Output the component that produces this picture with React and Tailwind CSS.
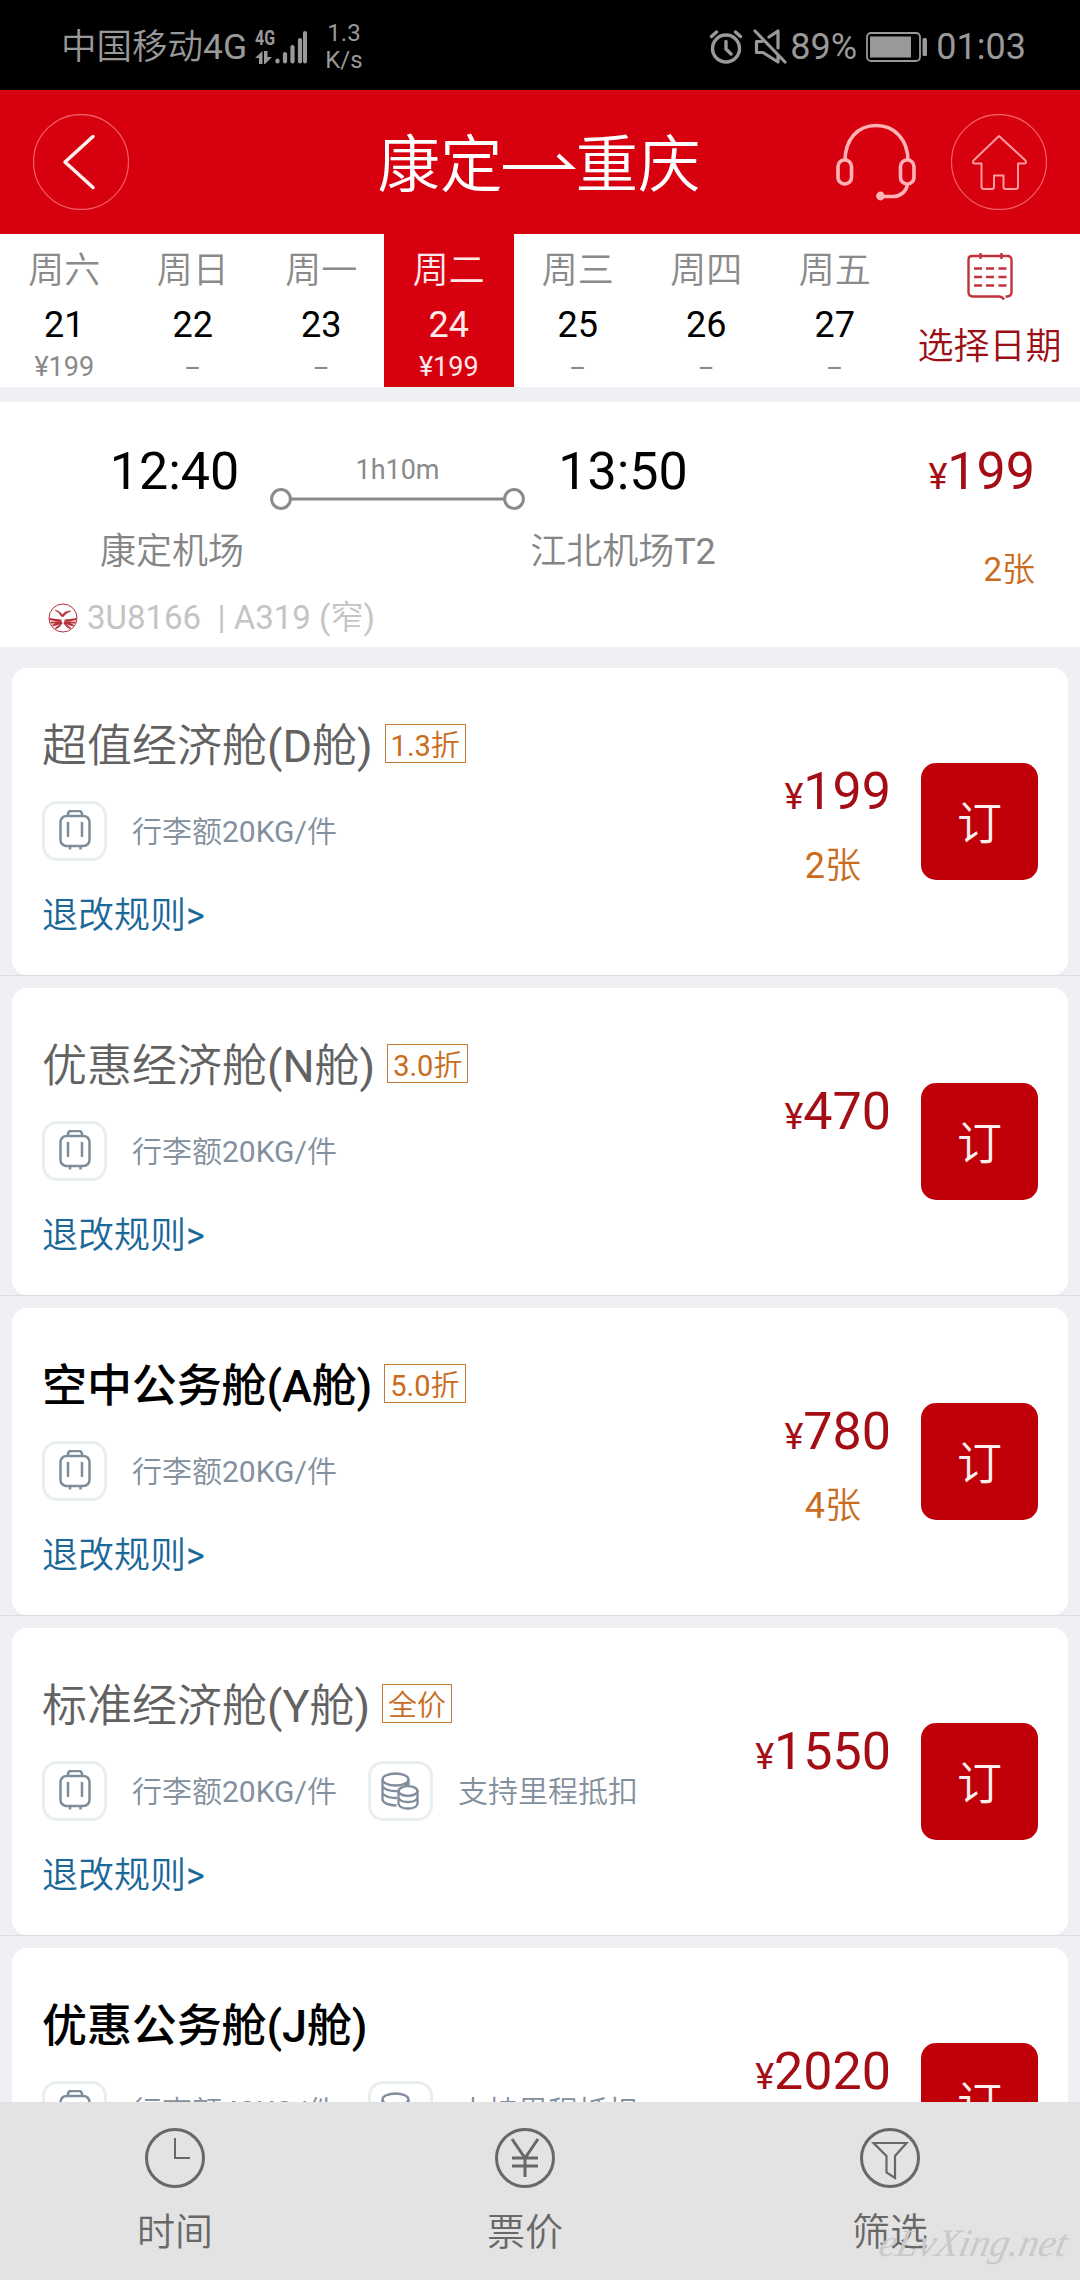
import { clsx } from "clsx";

const days = [
  { week: "周六", date: "21", price: "¥199" },
  { week: "周日", date: "22", price: "--" },
  { week: "周一", date: "23", price: "--" },
  { week: "周二", date: "24", price: "¥199", active: true },
  { week: "周三", date: "25", price: "--" },
  { week: "周四", date: "26", price: "--" },
  { week: "周五", date: "27", price: "--" },
];

const cabins = [
  { name: "超值经济舱(D舱)", discount: "1.3折", baggage: "行李额20KG/件", price: "199", seats: "2张" },
  { name: "优惠经济舱(N舱)", discount: "3.0折", baggage: "行李额20KG/件", price: "470" },
  { name: "空中公务舱(A舱)", discount: "5.0折", baggage: "行李额20KG/件", price: "780", seats: "4张", business: true },
  { name: "标准经济舱(Y舱)", discount: "全价", baggage: "行李额20KG/件", price: "1550", mileage: true },
  { name: "优惠公务舱(J舱)", baggage: "行李额40KG/件", price: "2020", mileage: true, business: true },
];

function StatusBar() {
  return (
    <div className="flex h-[90px] shrink-0 items-center justify-between bg-black pt-[3px] pl-[61px] pr-[54px] text-[36px] leading-[36px] text-[#999]">
      <div className="flex items-center">
        <span className="w-[194px] whitespace-nowrap text-[35.5px]">中国移动4G</span>
        <div className="flex w-[20px] flex-col">
          <span className="origin-left scale-x-[0.76] text-[21px] font-bold leading-[16px]">4G</span>
          <svg className="mt-[5px]" width="18" height="13" viewBox="0 0 18 13" fill="#999">
            <path d="M7.500 0v13H4V7H0zM9 0h3.500v6H17L10 13H9z" />
          </svg>
        </div>
        <svg width="32" height="34" viewBox="0 0 32 34" stroke="#999" strokeWidth="4.200" strokeLinecap="round">
          <path d="M2.500 30.500v1M10 24v7.500M17.500 17v14.500M25 10v21.500" />
          <path d="M30 3v28.500" strokeWidth="4" />
        </svg>
        <div className="ml-[17px] w-[40px] text-center text-[24px] leading-[27px]">
          <p>1.3</p>
          <p>K/s</p>
        </div>
      </div>
      <div className="flex items-center">
        <svg width="34" height="34" viewBox="0 0 34 34" fill="none" stroke="#999" strokeWidth="3.400" strokeLinecap="round">
          <circle cx="17" cy="18.500" r="13.500" />
          <path d="M17 11.500v7.500l5 5M2.500 6.500l5-4.500M31.500 6.500l-5-4.500" />
        </svg>
        <svg className="ml-[10px]" width="34" height="35" viewBox="0 0 34 35" fill="none" stroke="#999" strokeWidth="3.200" strokeLinecap="round" strokeLinejoin="round">
          <path d="M2 2l30 31M16 8l9-6v17M9 12.500H3.500v11H10l15 9.500v-7" />
        </svg>
        <span className="ml-[3px] w-[76px]">89%</span>
        <svg width="62" height="30" viewBox="0 0 62 30" fill="#999">
          <rect x="1" y="1" width="53" height="28" rx="4" fill="none" stroke="#999" strokeWidth="1.800" />
          <rect x="4" y="4.500" width="41" height="21" />
          <rect x="56.500" y="6" width="4.500" height="18" rx="1.500" />
        </svg>
        <span className="ml-[8px]">01:03</span>
      </div>
    </div>
  );
}

function Header() {
  return (
    <header className="flex h-[144px] shrink-0 items-center justify-between bg-[#d7000f] px-[33px] text-white">
      <button className="flex h-24 w-[211px]">
        <svg width="96" height="96" viewBox="0 0 96 96" fill="none">
          <circle cx="48" cy="48" r="47.500" stroke="#f4606a" strokeWidth="1.300" />
          <path d="M60 22.500L32 48l28 25.500" stroke="#fff0f0" strokeWidth="3.500" strokeLinecap="round" strokeLinejoin="round" />
        </svg>
      </button>
      <h1 className="flex items-center pt-[8px] pr-[2px] text-[62.5px] leading-[62px]">
        康定
        <svg className="-mt-[3px]" width="73" height="30" viewBox="0 0 73 30" fill="none">
          <path d="M0 17h68L55 5" stroke="#fff" strokeWidth="4" />
        </svg>
        重庆
      </h1>
      <div className="flex w-[211px] items-center">
        <svg width="80" height="78" viewBox="0 0 80 78" fill="none" stroke="#ffb3b7" strokeWidth="3.600">
          <path d="M9 38C9 17 21 2.500 40 2.500S72 17 72 38" />
          <rect x="2" y="37" width="13.500" height="24" rx="6.500" />
          <rect x="64.500" y="37" width="13.500" height="24" rx="6.500" />
          <path d="M71.500 61c-1 8-8 12.500-14 12.500H46" />
          <circle cx="44.500" cy="73" r="2.600" fill="#ffb3b7" />
        </svg>
        <svg className="ml-[35px]" width="96" height="96" viewBox="0 0 96 96" fill="none">
          <circle cx="48" cy="48" r="47.500" stroke="#f4606a" strokeWidth="1.300" />
          <path
            d="M48 22L22.500 46.500q-1.500 3 1.500 3h6.500v23q0 2.500 2.500 2.500h8q2 0 2-2V61.500h9.500V73q0 2 2 2h10q2.500 0 2.500-2.500v-23h6q3 0 1.500-3z"
            stroke="#ff9aa0"
            strokeWidth="2"
            strokeLinejoin="round"
          />
        </svg>
      </div>
    </header>
  );
}

function DayStrip() {
  return (
    <div className="flex h-[153px] shrink-0 bg-white text-center">
      {days.map((day) => (
        <div
          key={day.date}
          className={clsx(
            "pt-[19px]",
            day.active ? "-ml-[1.500px] w-[129.500px] bg-[#d7000f] text-[#ffe9ea]" : "w-[128.500px] text-[#8a8a8a]"
          )}
        >
          <p className="text-[36px] leading-[36px]">{day.week}</p>
          <p className={clsx("mt-[18px] text-[36px] leading-[36px]", !day.active && "text-black")}>{day.date}</p>
          <p className={clsx("mt-[11px] text-[27px] leading-[27px]", day.price === "--" && "-ml-[2px] tracking-[-1.500px]")}>
            {day.price}
          </p>
        </div>
      ))}
      <div className="flex flex-1 flex-col items-center pt-[19px]">
        <svg width="46" height="47" viewBox="0 0 46 47" fill="none" stroke="#c2323a" strokeWidth="2.400">
          <path d="M38.500 43.500H40q4.500 0 4.500-4.500V7q0-4-4-4H5Q1.500 3 1.500 7v32q0 4.500 4.500 4.500h26q3 0 5 3" />
          <path d="M13.500 0v6M34.500 0v6" />
          <path d="M7 15.500h8M19 15.500h8M31.500 15.500h8M7 24h8M19 24h8M31.500 24h8M7 32.500h8M19 32.500h8M31.500 32.500h8" />
        </svg>
        <p className="mt-[29px] text-[36px] leading-[36px] text-[#9c0f16]">选择日期</p>
      </div>
    </div>
  );
}

function Price({ value }) {
  return (
    <p className="text-[52px] leading-[52px] text-[#a50d15]">
      <span className="text-[36px] leading-none">¥</span>
      {value}
    </p>
  );
}

function AirlineLogo() {
  return (
    <svg width="30" height="30" viewBox="0 0 30 30" fill="none" stroke="#b5303a">
      <circle cx="15" cy="15" r="14" strokeWidth="1" />
      <path d="M7 7q5 1 7.500 5Q17 7.500 23 8q-5 1.500-7.500 5.500h-2Q11 9 7 7z" fill="#b5303a" strokeWidth="0.600" />
      <path d="M1.500 16q7 1.500 12 1.500M2.500 19.500q6 .5 11-1.500M4.500 22.500q5-.5 9-4M7.500 25.500q4-2 6.500-6M28.500 16q-7 1.500-12 1.500M27.500 19.500q-6 .5-11-1.500M25.500 22.500q-5-.5-9-4M22.500 25.500q-4-2-6.500-6" strokeWidth="1.800" />
    </svg>
  );
}

function FlightSummary() {
  return (
    <section className="mt-[15px] h-[245px] shrink-0 bg-white pt-[44px]">
      <div className="flex">
        <div className="ml-[100px] w-[144px] text-center">
          <p className="pl-[5px] text-[52px] leading-[52px] text-black">12:40</p>
          <p className="mt-[36px] text-[36px] leading-[36px] text-[#858585]">康定机场</p>
        </div>
        <div className="ml-[26px] w-[255px] pt-[11px] text-center text-[#8a8a8a]">
          <p className="text-[27px] leading-[27px]">1h10m</p>
          <svg className="mt-[4px]" width="255" height="22" viewBox="0 0 255 22" fill="none" stroke="#8a8a8a" strokeWidth="3">
            <circle cx="11" cy="11" r="9.400" />
            <circle cx="244" cy="11" r="9.400" />
            <path d="M20.500 11h214" />
          </svg>
        </div>
        <div className="ml-[5px] w-[186px] whitespace-nowrap text-center">
          <p className="text-[52px] leading-[52px] text-black">13:50</p>
          <p className="mt-[36px] text-[36px] leading-[36px] text-[#858585]">江北机场T2</p>
        </div>
        <div className="ml-auto pr-[45px] text-right">
          <Price value="199" />
          <p className="mt-[55px] text-[33px] leading-[33px] text-[#c96c20]">2张</p>
        </div>
      </div>
      <div className="mt-[15px] flex items-center pl-[48px] text-[33px] leading-[33px] text-[#c4c4c4]">
        <AirlineLogo />
        <span className="ml-[9px] whitespace-pre">{"3U8166  | A319 (窄)"}</span>
      </div>
    </section>
  );
}

function Perk({ icon, label }) {
  return (
    <div className="flex items-center">
      <div className="flex h-[60px] w-[65px] items-center justify-center rounded-[15px] border-[3px] border-[#e9eeef]">
        {icon}
      </div>
      <span className="ml-[25px] pt-[2px] text-[30px] leading-[30px] text-[#83909d]">{label}</span>
    </div>
  );
}

function LuggageIcon() {
  return (
    <svg className="-mt-[2px]" width="32" height="40" viewBox="0 0 32 40" fill="none" stroke="#7f8c9b" strokeWidth="2.500">
      <path d="M9 5.500V4q0-3 3-3h8q3 0 3 3v1.500" />
      <rect x="1.500" y="6" width="29" height="30" rx="6" />
      <path d="M9 12v15M23 12v15M11 36v3.500M21.500 36v3.500" />
    </svg>
  );
}

function CoinsIcon() {
  return (
    <svg width="38" height="38" viewBox="0 0 38 38" fill="none" stroke="#7f8c9b" strokeWidth="2.300">
      <ellipse cx="14.500" cy="7.500" rx="13" ry="6" />
      <path d="M1.500 7.500V28q2 5 14 5.500M27.500 7.500V13M1.500 14q3 5.500 15 5M27.500 9.500q-1 3-4 4M1.500 21q3 5 14.500 5" />
      <ellipse cx="27" cy="19" rx="9.500" ry="4.800" />
      <path d="M17.500 19v13c2 6 17 6 19 0V19M17.500 25.500c2 6 17 6 19 0" />
    </svg>
  );
}

function CabinCard({ cabin }) {
  return (
    <div className="flex h-[320px] shrink-0 flex-col">
      <div className="mx-[12px] flex h-[307px] rounded-[15px] bg-white pl-[30px] pr-[30px]">
        <div className="flex-1 pt-[49px]">
          <div className="flex">
            <h2
              className={clsx(
                "text-[45px] leading-[60px]",
                cabin.business
                  ? "font-['Roboto','Noto_Sans_CJK_SC',sans-serif] font-medium tracking-[-0.100px] text-black"
                  : "text-[#626262]"
              )}
            >
              {cabin.name}
            </h2>
            {cabin.discount && (
              <span className="ml-[12px] mt-[7px] flex h-[39px] items-center border border-[#c07a3a] px-[5px] pt-[5px] text-[29px] leading-[29px] text-[#c96c20]">
                {cabin.discount}
              </span>
            )}
          </div>
          <div className="mt-[24px] flex gap-[31px]">
            <Perk icon={<LuggageIcon />} label={cabin.baggage} />
            {cabin.mileage && <Perk icon={<CoinsIcon />} label="支持里程抵扣" />}
          </div>
          <a className="mt-[37px] block text-[36px] leading-[36px] text-[#1b6798]">退改规则&gt;</a>
        </div>
        <div className="flex flex-col pt-[98px]">
          <Price value={cabin.price} />
          {cabin.seats && (
            <p className="mr-[30px] mt-[30px] self-end text-[36px] leading-[36px] text-[#c96c20]">{cabin.seats}</p>
          )}
        </div>
        <button className="ml-[30px] mt-[95px] size-[117px] rounded-[15px] bg-[#c00008] pt-[5px] text-[45px] leading-[45px] text-[#fff0f0]">
          订
        </button>
      </div>
      <div className="h-[13px] border-t border-[#dddee2]" />
    </div>
  );
}

const tabs = [
  {
    label: "时间",
    icon: <path d="M30 10v20h15" strokeWidth="2" />,
  },
  {
    label: "票价",
    icon: <path d="M17 11l13 19 13-19M30 29v20M17 30h26M17 38h26" />,
  },
  {
    label: "筛选",
    icon: <path d="M13.500 15h33L35 28v22l-8.500-5.500V28z" strokeWidth="2.200" />,
  },
];

function BottomBar() {
  return (
    <nav className="relative grid h-[178px] shrink-0 grid-cols-[350px_350px_380px] bg-[#e3e3e3] text-[#686868]">
      {tabs.map((tab) => (
        <div key={tab.label} className="flex flex-col items-center pt-[26px]">
          <svg width="60" height="60" viewBox="0 0 60 60" fill="none" stroke="#686868" strokeWidth="3">
            <circle cx="30" cy="30" r="28.500" />
            {tab.icon}
          </svg>
          <p className="mt-[25px] text-[38px] leading-[38px]">{tab.label}</p>
        </div>
      ))}
      <span className="absolute right-[13px] bottom-[16px] -skew-x-12 font-['Liberation_Serif',serif] text-[39px] italic leading-[42px] text-[#c9c9c9]">
        eLvXing.net
      </span>
    </nav>
  );
}

function App() {
  return (
    <div className="flex h-[2280px] w-[1080px] flex-col overflow-hidden bg-[#eff0f4] font-['Roboto','Noto_Sans_CJK_SC_DemiLight','Noto_Sans_CJK_SC',sans-serif]">
      <StatusBar />
      <Header />
      <DayStrip />
      <FlightSummary />
      <main className="flex min-h-0 flex-1 flex-col overflow-hidden pt-[21px]">
        {cabins.map((cabin) => (
          <CabinCard key={cabin.name} cabin={cabin} />
        ))}
      </main>
      <BottomBar />
    </div>
  );
}

export default App;
